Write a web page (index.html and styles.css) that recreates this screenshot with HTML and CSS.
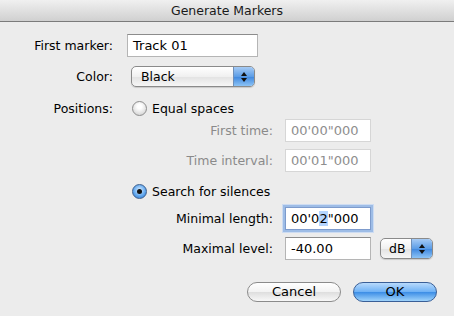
FILE: index.html
```html
<!DOCTYPE html>
<html lang="en">
<head>
    <meta charset="UTF-8">
    <title>Generate Markers</title>
    <link rel="stylesheet" href="styles.css">
</head>
<body>
    <div class="window">
        <div class="titlebar">Generate Markers</div>

        <div class="row row-marker">
            <span class="label">First marker:</span>
            <div class="field wide">Track 01</div>
        </div>

        <div class="row row-color">
            <span class="label">Color:</span>
            <div class="popup color-popup">
                <span class="popup-text">Black</span>
                <span class="popup-arrows"><i class="up"></i><i class="down"></i></span>
            </div>
        </div>

        <div class="row row-positions">
            <span class="label">Positions:</span>
            <span class="radio"></span>
            <span class="radio-text">Equal spaces</span>
        </div>

        <div class="row sub row-first">
            <span class="sublabel disabled">First time:</span>
            <div class="field time disabled">00'00"000</div>
        </div>

        <div class="row sub row-interval">
            <span class="sublabel disabled">Time interval:</span>
            <div class="field time disabled">00'01"000</div>
        </div>

        <div class="row row-search">
            <span class="label"></span>
            <span class="radio checked"></span>
            <span class="radio-text">Search for silences</span>
        </div>

        <div class="row sub row-minimal">
            <span class="sublabel">Minimal length:</span>
            <div class="field time focused">00'0<span class="sel">2</span>"000</div>
        </div>

        <div class="row sub row-maximal">
            <span class="sublabel">Maximal level:</span>
            <div class="field time">-40.00</div>
            <div class="popup unit-popup">
                <span class="popup-text">dB</span>
                <span class="popup-arrows"><i class="up"></i><i class="down"></i></span>
            </div>
        </div>

        <div class="row buttons">
            <button class="btn cancel">Cancel</button>
            <button class="btn ok">OK</button>
        </div>
    </div>
</body>
</html>
```

FILE: styles.css
```css
body {
    margin: 0;
    font-family: "DejaVu Sans", Verdana, sans-serif;
    font-size: 12.5px;
    color: #000;
    background-color: #ececec;
}
.window {
    width: 454px;
    height: 316px;
    background-color: #ececec;
    overflow: hidden;
}
.titlebar {
    height: 21px;
    line-height: 21px;
    text-align: center;
    font-size: 12.5px;
    color: #1a1a1a;
    background: linear-gradient(#f0f0f0, #d0d0d0);
    border-bottom: 1px solid #7b7b7b;
}
.row {
    display: flex;
    align-items: center;
}
.label {
    width: 113px;
    text-align: right;
    flex-shrink: 0;
}
.row-marker {
    margin-top: 12px;
    height: 23px;
}
.row-marker .field {
    margin-left: 14px;
}
.row-color {
    margin-top: 9px;
    height: 21px;
}
.row-color .popup {
    margin-left: 18px;
}
.row-positions {
    margin-top: 13px;
    height: 16px;
}
.row-search {
    margin-top: 11px;
    height: 16px;
}
.radio {
    width: 13px;
    height: 13px;
    margin-left: 19px;
    border-radius: 50%;
    border: 1px solid #8d8d8d;
    background: radial-gradient(circle at 50% 35%, #ffffff 20%, #d6d6d6 80%);
    box-sizing: content-box;
    flex-shrink: 0;
    display: flex;
    align-items: center;
    justify-content: center;
}
.radio.checked {
    border-color: #3d5f8e;
    background: radial-gradient(circle at 50% 40%, #c8e4ff 10%, #5ba3ec 60%, #2d6fc4 100%);
}
.radio.checked::after {
    content: "";
    width: 5px;
    height: 5px;
    border-radius: 50%;
    background-color: #111;
}
.radio-text {
    margin-left: 5px;
}
.sub {
    height: 23px;
}
.sublabel {
    width: 273px;
    text-align: right;
    flex-shrink: 0;
}
.sub .field {
    margin-left: 12px;
}
.row-first {
    margin-top: 3px;
}
.row-interval {
    margin-top: 7px;
}
.row-minimal {
    margin-top: 8px;
}
.row-maximal {
    margin-top: 7px;
}
.disabled {
    color: #8a8a8a;
}
.field {
    height: 23px;
    box-sizing: border-box;
    background-color: #fff;
    border: 1px solid #b5b5b5;
    border-top-color: #8c8c8c;
    padding: 0 5px;
    line-height: 21px;
    font-size: 13px;
}
.field.wide {
    width: 131px;
}
.field.time {
    width: 86px;
}
.field.disabled {
    border-color: #d6d6d6;
    color: #8e8e8e;
}
.field.focused {
    box-shadow: 0 0 0 2px #9dbce6, 0 0 0 3px #cddcf2;
    border-color: #7d9bcc;
}
.sel {
    background-color: #b5d5ff;
}
.popup {
    display: flex;
    height: 21px;
    box-sizing: border-box;
    border: 1px solid #8a8a8a;
    border-radius: 5px;
    background: linear-gradient(#ffffff, #f0f0f0 50%, #e2e2e2 51%, #f6f6f6);
    overflow: hidden;
    box-shadow: 0 1px 1px rgba(0, 0, 0, 0.15);
}
.popup-text {
    flex: 1;
    padding-left: 9px;
    line-height: 19px;
}
.popup-arrows {
    width: 20px;
    border-left: 1px solid #6f8fb8;
    background: linear-gradient(#a6cbf5, #5c9de6 50%, #3d86de 51%, #8cc3f5);
    display: flex;
    flex-direction: column;
    align-items: center;
    justify-content: center;
    gap: 2px;
}
.popup-arrows i {
    width: 0;
    height: 0;
    border-left: 3px solid transparent;
    border-right: 3px solid transparent;
}
.popup-arrows .up {
    border-bottom: 4px solid #111;
}
.popup-arrows .down {
    border-top: 4px solid #111;
}
.color-popup {
    width: 124px;
}
.unit-popup {
    width: 53px;
    margin-left: 9px;
}
.unit-popup .popup-text {
    padding-left: 8px;
}
.buttons {
    margin-top: 22px;
    justify-content: flex-end;
    padding-right: 17px;
    gap: 12px;
}
.btn {
    height: 20px;
    border-radius: 10px;
    font-family: inherit;
    font-size: 13px;
    padding: 0;
    line-height: 18px;
    cursor: pointer;
}
.cancel {
    width: 94px;
    border: 1px solid #8b8b8b;
    background: linear-gradient(#ffffff, #f2f2f2 50%, #dedede 51%, #f8f8f8);
}
.ok {
    width: 84px;
    border: 1px solid #3a5f97;
    background: linear-gradient(#b8dafc, #6cb0f5 50%, #3b8de6 51%, #9fd3fb);
}
```
